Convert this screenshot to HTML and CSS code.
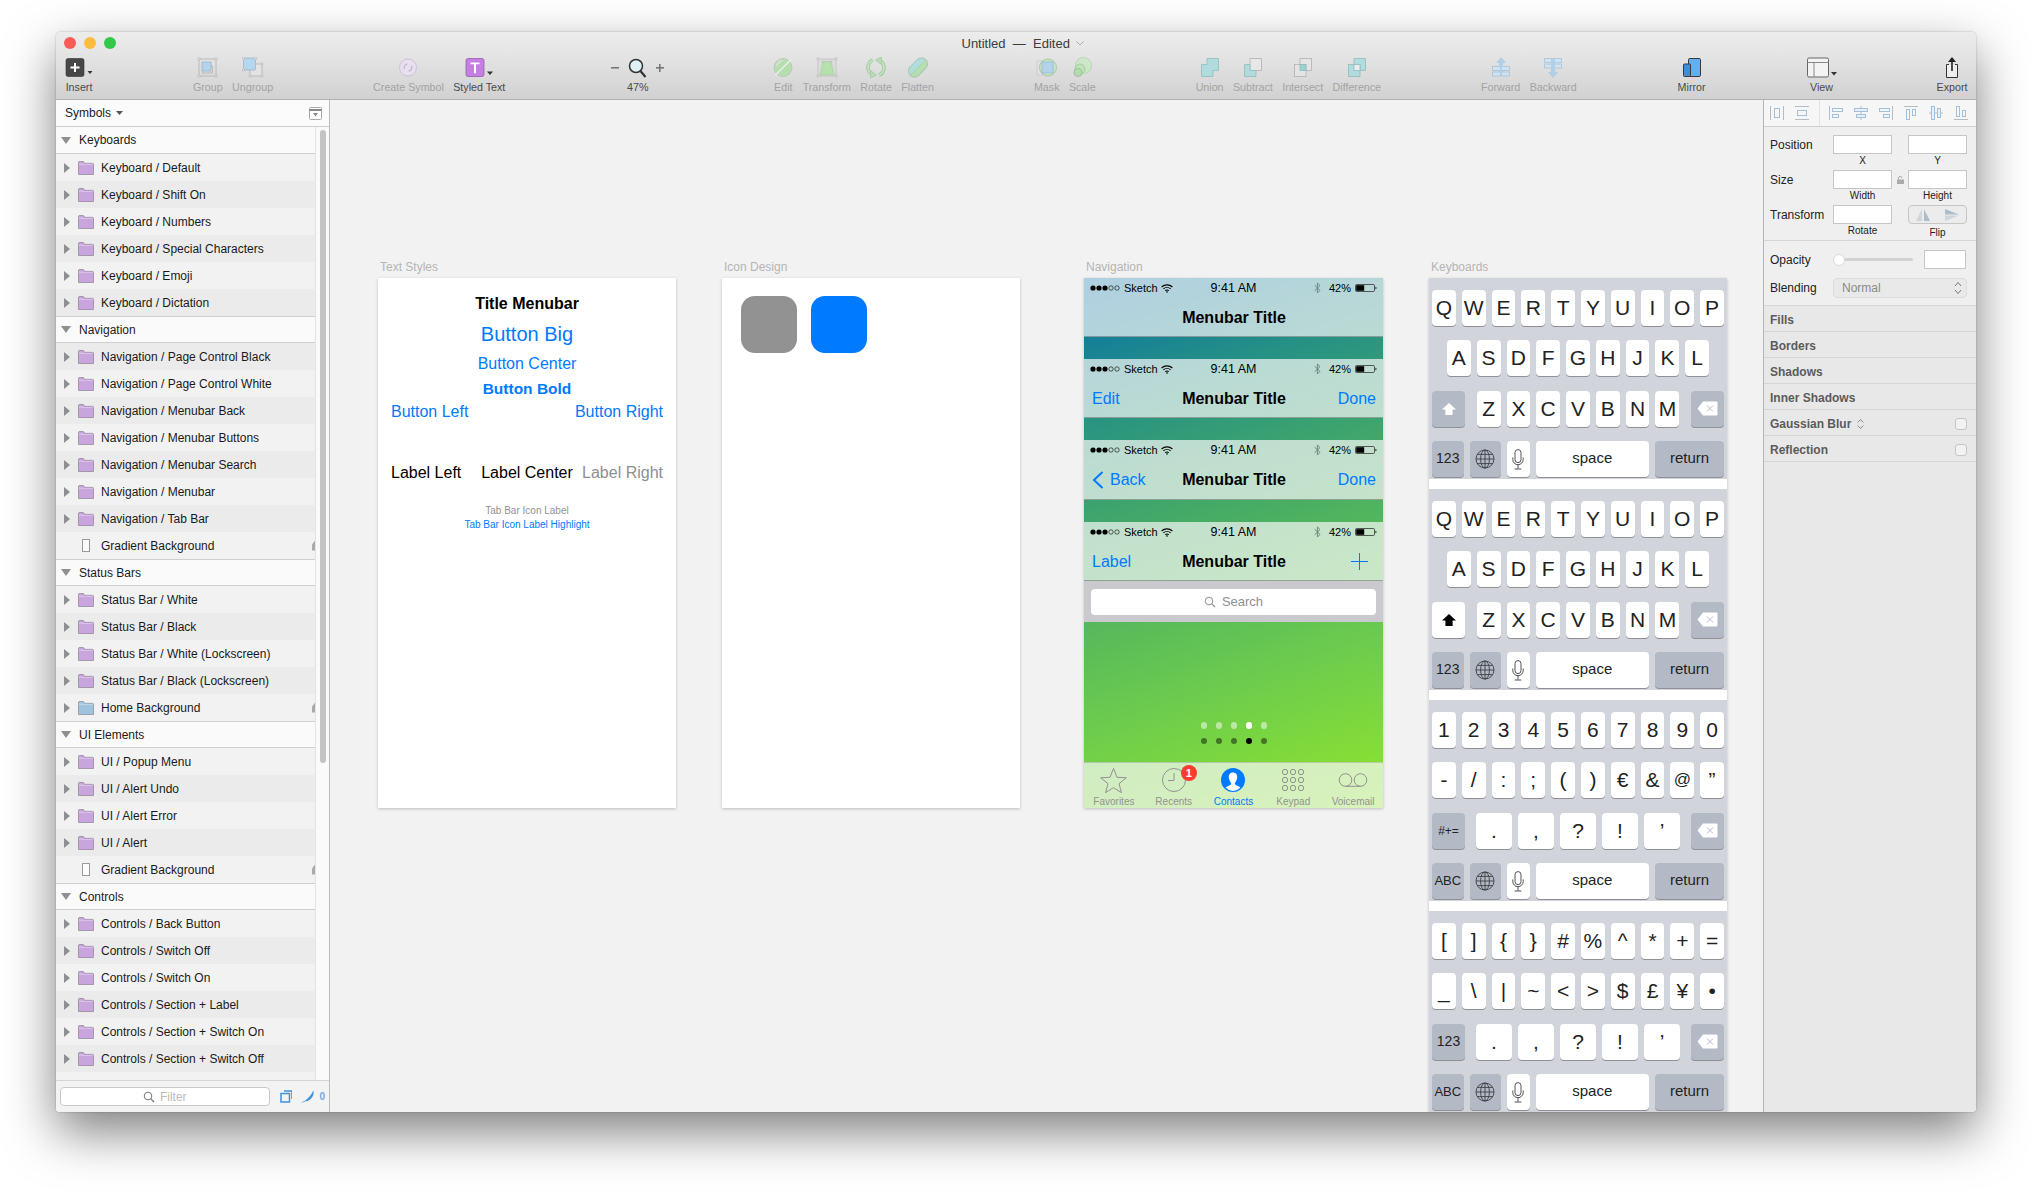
FILE: index.html
```html
<!DOCTYPE html>
<html lang="en">
  <head>
    <meta charset="UTF-8"/>
    <title>Untitled - Edited</title>
    <link rel="stylesheet" href="styles.css">
  </head>
  <body>
    <svg class="sprites" width="0" height="0">
      <symbol id="folder" viewBox="0 0 16 14"><path d="M.5 13.5V1.5q0-1 1-1h3.5q.8 0 1.2 1l.3.8h8q1 0 1 1v10.2z" fill="currentColor" stroke="#00000040"/><path d="M1 3.2h14" stroke="#ffffff70"/></symbol>
      <symbol id="magnifier" viewBox="0 0 12 12"><circle cx="5" cy="5" r="3.8" fill="none" stroke="currentColor" stroke-width="1"/><path d="M7.8 7.8 11 11" stroke="currentColor" stroke-width="1.2"/></symbol>
      <symbol id="signal" viewBox="0 0 31 6"><circle cx="3" cy="3" r="2.6"/><circle cx="9" cy="3" r="2.6"/><circle cx="15" cy="3" r="2.6"/><circle cx="21" cy="3" r="2.2" fill="none" stroke="#000" stroke-width=".6"/><circle cx="27" cy="3" r="2.2" fill="none" stroke="#000" stroke-width=".6"/></symbol>
      <symbol id="wifi" viewBox="0 0 12 9"><path d="M.6 3a8 8 0 0 1 10.8 0M2.4 4.9a5.4 5.4 0 0 1 7.2 0M4.2 6.7a2.8 2.8 0 0 1 3.6 0" fill="none" stroke="#000" stroke-width="1.1"/><path d="M6 9 4.9 7.8a1.6 1.6 0 0 1 2.2 0z"/></symbol>
      <symbol id="bluetooth" viewBox="0 0 7 12"><path d="M.6 3.2 6 8.4 3.4 11V1L6 3.6.6 8.8" fill="none" stroke="#6f8a80" stroke-width="1"/></symbol>
      <symbol id="battery" viewBox="0 0 22 8"><rect x=".5" y=".5" width="19" height="7" rx="1.2" fill="none" stroke="#333" stroke-width=".8"/><rect x="1.2" y="1.2" width="8" height="5.6"/><path d="M20.5 2.8q1 .2 1 1.2t-1 1.2z"/></symbol>
      <symbol id="shift" viewBox="0 0 16 14"><path d="M8 1 15 7.6h-3.4V13H4.4V7.6H1z" fill="currentColor"/></symbol>
      <symbol id="del" viewBox="0 0 21 15"><path d="M6 .5h13.5q1 0 1 1v12q0 1-1 1H6L.5 7.5z" fill="#fff"/><path d="M10 4.5l6 6m0-6-6 6" stroke="#b5bcc8" stroke-width="1"/></symbol>
      <symbol id="globe" viewBox="0 0 20 20"><g fill="none" stroke="#3c3f44" stroke-width=".9"><circle cx="10" cy="10" r="9"/><ellipse cx="10" cy="10" rx="4.4" ry="9"/><path d="M10 1v18M1 10h18M2.4 5.4h15.2M2.4 14.6h15.2"/></g></symbol>
      <symbol id="mic" viewBox="0 0 12 21"><g fill="none" stroke="#3c3f44" stroke-width=".9"><rect x="3" y=".6" width="6" height="13" rx="3"/><path d="M.8 8.5v2a5.2 5.2 0 0 0 10.4 0v-2M6 15.8v3.8M2.6 20h6.8"/></g></symbol>
      <symbol id="tri_down" viewBox="0 0 7 4"><path d="M0 0h7L3.5 4z" fill="currentColor"/></symbol>
    </svg>

    <div class="window">
      <div class="titlebar">
        <div class="lights">
          <span class="light light_red"></span>
          <span class="light light_yellow"></span>
          <span class="light light_green"></span>
        </div>
        <p class="window_title">Untitled &nbsp;&mdash;&nbsp; Edited <svg class="title_chevron" viewBox="0 0 8 5"><path d="M.5.5 4 4 7.5.5" fill="none" stroke="#aaa"/></svg></p>
      </div>

      <div class="toolbar">
        <div class="tool tool_on">
          <svg class="tool_icon" width="28" height="21" viewBox="0 0 28 21"><rect x="1" y="1.500" width="18" height="18" rx="2" fill="#464646" stroke="#333" stroke-width=".6"/><path d="M10 6v9M5.500 10.500h9" stroke="#fff" stroke-width="2"/><path d="M22.500 14h5L25 17z" fill="#333"/></svg>
          <span>Insert</span>
        </div>
        <div class="tool_group">
          <div class="tool">
            <svg class="tool_icon" width="22" height="21" viewBox="0 0 22 21"><g fill="none" stroke="#b4b4b4"><rect x="2" y="2" width="17" height="17"/><rect x="5.500" y="9" width="10" height="7"/></g><rect x="5" y="5" width="9" height="9" fill="#aed1ee" stroke="#85aac8" stroke-width=".7"/><g fill="#eee" stroke="#aaa" stroke-width=".7"><circle cx="2" cy="2" r="1.300"/><circle cx="19" cy="2" r="1.300"/><circle cx="2" cy="19" r="1.300"/><circle cx="19" cy="19" r="1.300"/></g></svg>
            <span>Group</span>
          </div>
          <div class="tool">
            <svg class="tool_icon" width="22" height="21" viewBox="0 0 22 21"><rect x="8" y="7" width="12" height="12" fill="#e4e4e4" stroke="#b4b4b4"/><rect x="1.500" y="1" width="12" height="12" rx="1" fill="#aed5f2" stroke="#85aac8" stroke-width=".7"/><g fill="#eee" stroke="#aaa" stroke-width=".7"><circle cx="1.500" cy="1.500" r="1.200"/><circle cx="13.500" cy="1.500" r="1.200"/><circle cx="1.500" cy="13" r="1.200"/><circle cx="20" cy="7" r="1.200"/><circle cx="8" cy="19" r="1.200"/><circle cx="20" cy="19" r="1.200"/></g></svg>
            <span>Ungroup</span>
          </div>
        </div>
        <div class="tool_group">
          <div class="tool">
            <svg class="tool_icon" width="20" height="21" viewBox="0 0 20 21"><circle cx="10" cy="10.500" r="8.500" fill="#e9e2ee" stroke="#cfbadd"/><path d="M6.500 12a3.800 3.800 0 0 1 3-5.200M13.500 9a3.800 3.800 0 0 1-3 5.200" fill="none" stroke="#cba7e2" stroke-width="1.300"/></svg>
            <span>Create Symbol</span>
          </div>
          <div class="tool tool_on">
            <svg class="tool_icon" width="30" height="21" viewBox="0 0 30 21"><rect x="2" y="1.500" width="18" height="18" rx="2" fill="#c67ee2" stroke="#8a56a5" stroke-width=".7"/><path d="M6.500 5.500h9v1.800h-3.500v9h-2v-9H6.500z" fill="#fff"/><path d="M23 14.500h6l-3 3.500z" fill="#333"/></svg>
            <span>Styled Text</span>
          </div>
        </div>
        <div class="zoom_tool tool_on">
          <div class="zoom_controls">
            <span class="zoom_minus"></span>
            <svg class="tool_icon" width="19" height="20" viewBox="0 0 19 20"><circle cx="8" cy="8" r="6.500" fill="#dff0f5" stroke="#333" stroke-width="1.500"/><path d="M12.500 13 17.500 19" stroke="#333" stroke-width="2.200"/></svg>
            <span class="zoom_plus"></span>
          </div>
          <span>47%</span>
        </div>
        <div class="tool_group tool_group_wide">
          <div class="tool">
            <svg class="tool_icon" width="20" height="21" viewBox="0 0 20 21"><circle cx="10" cy="10.500" r="9" fill="#afdfa6" stroke="#b7c7b4"/><path d="M2.500 18 17.500 3" stroke="#f2f2f2" stroke-width="1.300"/><path d="M2.500 10a8 8 0 0 1 8-7.500L3 10z" fill="#d8e0d6"/></svg>
            <span>Edit</span>
          </div>
          <div class="tool">
            <svg class="tool_icon" width="22" height="21" viewBox="0 0 22 21"><rect x="2" y="2" width="18" height="17" fill="#dcdcdc" stroke="#bbb" stroke-width=".8"/><path d="M7 4.500h8L18 18H4z" fill="#aee3a4" stroke="#9bc496" stroke-width=".6"/><g fill="#eee" stroke="#aaa" stroke-width=".7"><circle cx="2" cy="2" r="1.300"/><circle cx="20" cy="2" r="1.300"/><circle cx="2" cy="19" r="1.300"/><circle cx="20" cy="19" r="1.300"/><circle cx="7" cy="5" r="1"/><circle cx="15" cy="5" r="1"/></g></svg>
            <span>Transform</span>
          </div>
          <div class="tool">
            <svg class="tool_icon" width="24" height="21" viewBox="0 0 24 21"><g fill="none"><path d="M9 3A8 8 0 0 0 7.500 17" stroke="#93c48f" stroke-width="3.400"/><path d="M15 18A8 8 0 0 0 16.500 4" stroke="#93c48f" stroke-width="3.400"/><path d="M9 3A8 8 0 0 0 7.500 17" stroke="#c6e6c1" stroke-width="1.600"/><path d="M15 18A8 8 0 0 0 16.500 4" stroke="#c6e6c1" stroke-width="1.600"/></g><path d="M12.500 18 6.500 21 6.500 13.500zM11.500 3l6-3 0 7.500z" fill="#b4dcae" stroke="#93c48f" stroke-width=".7"/></svg>
            <span>Rotate</span>
          </div>
          <div class="tool">
            <svg class="tool_icon" width="22" height="21" viewBox="0 0 22 21"><g transform="rotate(-45 11 10.500)"><rect x="0" y="4.500" width="22" height="12" rx="6" fill="#afdfa6" stroke="#a5bfa6"/><path d="M6 4.500h10a6 6 0 0 1 6 6H0a6 6 0 0 1 6-6z" fill="#a8dedb" stroke="#a5bfb6" stroke-width=".6"/></g></svg>
            <span>Flatten</span>
          </div>
        </div>
        <div class="tool_group">
          <div class="tool">
            <svg class="tool_icon" width="22" height="21" viewBox="0 0 22 21"><rect x="1" y="4" width="14" height="14" fill="#e2e2e2" stroke="#ccc"/><circle cx="12" cy="10.500" r="8.500" fill="#c2e5bd" stroke="#9cc896"/><rect x="6" y="5" width="11" height="11" fill="#aed1ee" stroke="#8db1cd" stroke-width=".8"/></svg>
            <span>Mask</span>
          </div>
          <div class="tool">
            <svg class="tool_icon" width="22" height="21" viewBox="0 0 22 21"><circle cx="12.500" cy="8.500" r="8" fill="#cbe9c6" stroke="#aed6a9"/><circle cx="9" cy="12" r="5" fill="#bce2b6" stroke="#9cc896"/><circle cx="7" cy="15.500" r="4" fill="#afdaa8" stroke="#91be8b"/></svg>
            <span>Scale</span>
          </div>
        </div>
        <div class="tool_group">
          <div class="tool">
            <svg class="tool_icon" width="20" height="21" viewBox="0 0 20 21"><path d="M7 1.500h11.500v12H13v6H1.500v-12H7z" fill="#a9dcdd" stroke="#86b6b8" stroke-width=".8"/></svg>
            <span>Union</span>
          </div>
          <div class="tool">
            <svg class="tool_icon" width="20" height="21" viewBox="0 0 20 21"><rect x="7" y="1.500" width="11.500" height="12" fill="#e9e9e9" stroke="#aaa" stroke-width=".8"/><path d="M1.500 7.500H7v6h6v6H1.500z" fill="#a9dcdd" stroke="#86b6b8" stroke-width=".8"/></svg>
            <span>Subtract</span>
          </div>
          <div class="tool">
            <svg class="tool_icon" width="20" height="21" viewBox="0 0 20 21"><g fill="#e6e6e6" stroke="#aaa" stroke-width=".8"><rect x="7" y="1.500" width="11.500" height="12"/><rect x="1.500" y="7.500" width="11.500" height="12"/></g><rect x="7" y="7.500" width="6" height="6" fill="#8fcfd1" stroke="#86b6b8" stroke-width=".8"/></svg>
            <span>Intersect</span>
          </div>
          <div class="tool">
            <svg class="tool_icon" width="20" height="21" viewBox="0 0 20 21"><g fill="#a9dcdd" stroke="#86b6b8" stroke-width=".8"><rect x="7" y="1.500" width="11.500" height="12"/><rect x="1.500" y="7.500" width="11.500" height="12"/></g><rect x="7" y="7.500" width="6" height="6" fill="#f0f0f0" stroke="#86b6b8" stroke-width=".8"/></svg>
            <span>Difference</span>
          </div>
        </div>
        <div class="tool_group">
          <div class="tool">
            <svg class="tool_icon" width="20" height="21" viewBox="0 0 20 21"><path d="M10 0 15 6H12v13H8V6H5z" fill="#a9cde9"/><g fill="#cfe3f3" stroke="#9cbfdc" stroke-width=".8"><rect x="1.500" y="9.500" width="17" height="4"/><rect x="1.500" y="15" width="17" height="4"/></g><path d="M10 1.500 13 6h-2v13H9V6H7z" fill="#a9cde9"/></svg>
            <span>Forward</span>
          </div>
          <div class="tool">
            <svg class="tool_icon" width="20" height="21" viewBox="0 0 20 21"><g fill="#cfe3f3" stroke="#9cbfdc" stroke-width=".8"><rect x="1.500" y="1.500" width="17" height="4"/><rect x="1.500" y="7" width="17" height="4"/></g><path d="M8 2h4v13h3l-5 6-5-6h3z" fill="#a9cde9"/></svg>
            <span>Backward</span>
          </div>
        </div>
        <div class="tool tool_on tool_loose">
          <svg class="tool_icon" width="20" height="21" viewBox="0 0 20 21"><rect x="6.500" y="1.500" width="12" height="18" rx="1.300" fill="#62b0f4" stroke="#3a3a3a"/><rect x="1.500" y="7" width="7" height="12.500" rx="1" fill="#3c8edb" stroke="#3a3a3a"/></svg>
          <span>Mirror</span>
        </div>
        <div class="tool tool_on tool_loose">
          <svg class="tool_icon" width="30" height="21" viewBox="0 0 30 21"><rect x=".5" y="1" width="21" height="19" rx="1.500" fill="#f3f3f3" stroke="#666"/><path d="M.5 5.500h21M7 5.500V20" stroke="#888" fill="none"/><path d="M24 15h6l-3 3.500z" fill="#333"/></svg>
          <span>View</span>
        </div>
        <div class="tool tool_on">
          <svg class="tool_icon" width="14" height="21" viewBox="0 0 14 21"><path d="M4 7.500H1.500v13h11v-13H10" fill="#eee" stroke="#333"/><path d="M7 14V3" stroke="#222" stroke-width="1.600"/><path d="M7 0 11 5H3z" fill="#222"/></svg>
          <span>Export</span>
        </div>
      </div>

      <div class="workspace">
        <aside class="sidebar">
          <div class="sidebar_head">
            <span>Symbols</span>
            <svg class="head_tri" width="7" height="4"><use href="#tri_down"/></svg>
            <svg class="head_toggle" width="13" height="13" viewBox="0 0 13 13"><rect x=".5" y=".5" width="12" height="12" rx="1" fill="#fff" stroke="#aaa"/><path d="M.5 3h12" stroke="#888" stroke-width="2"/><path d="M4 6h5L6.500 9.500z" fill="#888"/></svg>
          </div>
          <div class="sidebar_body">
            <div class="layer_list">
              <div class="layer_header"><span class="arrow_down"></span>Keyboards</div>
              <div class="layer_row"><span class="arrow_right"></span><svg class="folder"><use href="#folder"/></svg>Keyboard / Default</div>
              <div class="layer_row"><span class="arrow_right"></span><svg class="folder"><use href="#folder"/></svg>Keyboard / Shift On</div>
              <div class="layer_row"><span class="arrow_right"></span><svg class="folder"><use href="#folder"/></svg>Keyboard / Numbers</div>
              <div class="layer_row"><span class="arrow_right"></span><svg class="folder"><use href="#folder"/></svg>Keyboard / Special Characters</div>
              <div class="layer_row"><span class="arrow_right"></span><svg class="folder"><use href="#folder"/></svg>Keyboard / Emoji</div>
              <div class="layer_row"><span class="arrow_right"></span><svg class="folder"><use href="#folder"/></svg>Keyboard / Dictation</div>
              <div class="layer_header"><span class="arrow_down"></span>Navigation</div>
              <div class="layer_row"><span class="arrow_right"></span><svg class="folder"><use href="#folder"/></svg>Navigation / Page Control Black</div>
              <div class="layer_row"><span class="arrow_right"></span><svg class="folder"><use href="#folder"/></svg>Navigation / Page Control White</div>
              <div class="layer_row"><span class="arrow_right"></span><svg class="folder"><use href="#folder"/></svg>Navigation / Menubar Back</div>
              <div class="layer_row"><span class="arrow_right"></span><svg class="folder"><use href="#folder"/></svg>Navigation / Menubar Buttons</div>
              <div class="layer_row"><span class="arrow_right"></span><svg class="folder"><use href="#folder"/></svg>Navigation / Menubar Search</div>
              <div class="layer_row"><span class="arrow_right"></span><svg class="folder"><use href="#folder"/></svg>Navigation / Menubar</div>
              <div class="layer_row"><span class="arrow_right"></span><svg class="folder"><use href="#folder"/></svg>Navigation / Tab Bar</div>
              <div class="layer_row layer_row_page"><span class="page_icon"></span>Gradient Background<span class="row_flag"></span></div>
              <div class="layer_header"><span class="arrow_down"></span>Status Bars</div>
              <div class="layer_row"><span class="arrow_right"></span><svg class="folder"><use href="#folder"/></svg>Status Bar / White</div>
              <div class="layer_row"><span class="arrow_right"></span><svg class="folder"><use href="#folder"/></svg>Status Bar / Black</div>
              <div class="layer_row"><span class="arrow_right"></span><svg class="folder"><use href="#folder"/></svg>Status Bar / White (Lockscreen)</div>
              <div class="layer_row"><span class="arrow_right"></span><svg class="folder"><use href="#folder"/></svg>Status Bar / Black (Lockscreen)</div>
              <div class="layer_row"><span class="arrow_right"></span><svg class="folder folder_blue"><use href="#folder"/></svg>Home Background<span class="row_flag"></span></div>
              <div class="layer_header"><span class="arrow_down"></span>UI Elements</div>
              <div class="layer_row"><span class="arrow_right"></span><svg class="folder"><use href="#folder"/></svg>UI / Popup Menu</div>
              <div class="layer_row"><span class="arrow_right"></span><svg class="folder"><use href="#folder"/></svg>UI / Alert Undo</div>
              <div class="layer_row"><span class="arrow_right"></span><svg class="folder"><use href="#folder"/></svg>UI / Alert Error</div>
              <div class="layer_row"><span class="arrow_right"></span><svg class="folder"><use href="#folder"/></svg>UI / Alert</div>
              <div class="layer_row layer_row_page"><span class="page_icon"></span>Gradient Background<span class="row_flag"></span></div>
              <div class="layer_header"><span class="arrow_down"></span>Controls</div>
              <div class="layer_row"><span class="arrow_right"></span><svg class="folder"><use href="#folder"/></svg>Controls / Back Button</div>
              <div class="layer_row"><span class="arrow_right"></span><svg class="folder"><use href="#folder"/></svg>Controls / Switch Off</div>
              <div class="layer_row"><span class="arrow_right"></span><svg class="folder"><use href="#folder"/></svg>Controls / Switch On</div>
              <div class="layer_row"><span class="arrow_right"></span><svg class="folder"><use href="#folder"/></svg>Controls / Section + Label</div>
              <div class="layer_row"><span class="arrow_right"></span><svg class="folder"><use href="#folder"/></svg>Controls / Section + Switch On</div>
              <div class="layer_row"><span class="arrow_right"></span><svg class="folder"><use href="#folder"/></svg>Controls / Section + Switch Off</div>
              <div class="layer_row"><svg class="folder folder_cut"><use href="#folder"/></svg></div>
            </div>
            <div class="scroll_track"><div class="scroll_thumb"></div></div>
          </div>
          <div class="sidebar_foot">
            <div class="filter_box">
              <svg class="filter_icon" width="12" height="12"><use href="#magnifier"/></svg>
              <span>Filter</span>
            </div>
            <svg class="foot_icon" width="13" height="13" viewBox="0 0 13 13"><g fill="none" stroke="#3d93dc" stroke-width="1.500"><path d="M4 1h8v8"/><rect x="1" y="3.500" width="8.500" height="8.500"/></g></svg>
            <svg class="foot_icon foot_pen" width="13" height="13" viewBox="0 0 13 13"><path d="M0 12.500C5 11 9 7 12.500 .5c1 4-1.500 9-6 10.500L4 11.500 1.500 12.500z" fill="#3d93dc"/></svg>
            <span class="foot_count">0</span>
          </div>
        </aside>

        <main class="canvas">
          <section class="artboard">
            <p class="artboard_label">Text Styles</p>
            <div class="board board_text">
              <p class="ts ts_title">Title Menubar</p>
              <p class="ts ts_big">Button Big</p>
              <p class="ts ts_center">Button Center</p>
              <p class="ts ts_bold">Button Bold</p>
              <div class="ts_row ts_buttons"><span>Button Left</span><span>Button Right</span></div>
              <div class="ts_labels"><span class="ts_left">Label Left</span><span>Label Center</span><span class="ts_muted">Label Right</span></div>
              <p class="ts ts_tab">Tab Bar Icon Label</p>
              <p class="ts ts_tab ts_tab_on">Tab Bar Icon Label Highlight</p>
            </div>
          </section>

          <section class="artboard artboard_icons">
            <p class="artboard_label">Icon Design</p>
            <div class="board board_icons">
              <div class="icon_tile"></div>
              <div class="icon_tile icon_tile_blue"></div>
            </div>
          </section>

          <section class="artboard artboard_nav">
            <p class="artboard_label">Navigation</p>
            <div class="board board_nav">
              <div class="nav_bar">
                <div class="status"><div class="status_left"><svg width="31" height="6"><use href="#signal"/></svg><span>Sketch</span><svg width="12" height="9"><use href="#wifi"/></svg></div><span class="status_time">9:41 AM</span><div class="status_right"><svg width="7" height="12"><use href="#bluetooth"/></svg><span>42%</span><svg width="22" height="8"><use href="#battery"/></svg></div></div>
                <div class="nav_row"><span></span><span class="nav_title">Menubar Title</span><span></span></div>
              </div>
              <div class="nav_bar">
                <div class="status"><div class="status_left"><svg width="31" height="6"><use href="#signal"/></svg><span>Sketch</span><svg width="12" height="9"><use href="#wifi"/></svg></div><span class="status_time">9:41 AM</span><div class="status_right"><svg width="7" height="12"><use href="#bluetooth"/></svg><span>42%</span><svg width="22" height="8"><use href="#battery"/></svg></div></div>
                <div class="nav_row"><span class="nav_btn">Edit</span><span class="nav_title">Menubar Title</span><span class="nav_btn nav_btn_right">Done</span></div>
              </div>
              <div class="nav_bar nav_bar_tall">
                <div class="status"><div class="status_left"><svg width="31" height="6"><use href="#signal"/></svg><span>Sketch</span><svg width="12" height="9"><use href="#wifi"/></svg></div><span class="status_time">9:41 AM</span><div class="status_right"><svg width="7" height="12"><use href="#bluetooth"/></svg><span>42%</span><svg width="22" height="8"><use href="#battery"/></svg></div></div>
                <div class="nav_row"><span class="nav_btn nav_back"><svg width="12" height="18" viewBox="0 0 12 18"><path d="M10.500 1 2 9l8.500 8" fill="none" stroke="#007aff" stroke-width="2"/></svg>Back</span><span class="nav_title">Menubar Title</span><span class="nav_btn nav_btn_right">Done</span></div>
              </div>
              <div class="nav_bar">
                <div class="status"><div class="status_left"><svg width="31" height="6"><use href="#signal"/></svg><span>Sketch</span><svg width="12" height="9"><use href="#wifi"/></svg></div><span class="status_time">9:41 AM</span><div class="status_right"><svg width="7" height="12"><use href="#bluetooth"/></svg><span>42%</span><svg width="22" height="8"><use href="#battery"/></svg></div></div>
                <div class="nav_row"><span class="nav_btn">Label</span><span class="nav_title">Menubar Title</span><span class="nav_btn nav_btn_right nav_plus"><svg width="17" height="17" viewBox="0 0 17 17"><path d="M8.500 0v17M0 8.500h17" stroke="#007aff" stroke-width="1"/></svg></span></div>
              </div>
              <div class="search_bar">
                <div class="search_field">
                  <svg width="12" height="12"><use href="#magnifier"/></svg>
                  <span>Search</span>
                </div>
              </div>
              <div class="home_area">
                <div class="page_dots"><i></i><i></i><i></i><i class="on"></i><i></i></div>
                <div class="page_dots page_dots_dark"><i></i><i></i><i></i><i class="on"></i><i></i></div>
              </div>
              <div class="tab_bar">
                <div class="tab">
                  <svg width="27" height="26" viewBox="0 0 27 26"><path d="M13.500 1.500 17 10.300l9.300.5-7.300 5.900 2.500 9-8-5.100-8 5.100 2.500-9L.700 10.800l9.300-.5z" fill="none" stroke="#929292"/></svg>
                  <span>Favorites</span>
                </div>
                <div class="tab">
                  <svg width="26" height="26" viewBox="0 0 26 26"><circle cx="13" cy="13" r="11.500" fill="none" stroke="#929292"/><path d="M13 6v7.500H7" fill="none" stroke="#929292"/></svg>
                  <span class="tab_badge">1</span>
                  <span>Recents</span>
                </div>
                <div class="tab tab_on">
                  <svg width="26" height="26" viewBox="0 0 26 26"><circle cx="13" cy="13" r="12" fill="#007aff"/><path d="M13 5.500c3 0 4.400 2.300 4.200 5-.2 2.600-1.400 4.400-2.300 5.400-.5 1 .1 1.700 2 2.500 1.500.6 2.800 1.200 3.600 2A12 12 0 0 1 13 24a12 12 0 0 1-7.500-3.600c.8-.8 2.100-1.400 3.600-2 1.900-.8 2.500-1.500 2-2.500-.9-1-2.100-2.800-2.300-5.400-.2-2.700 1.200-5 4.200-5z" fill="#fff"/></svg>
                  <span>Contacts</span>
                </div>
                <div class="tab">
                  <svg width="26" height="26" viewBox="0 0 26 26"><g fill="none" stroke="#929292"><circle cx="5" cy="5" r="2.700"/><circle cx="13" cy="5" r="2.700"/><circle cx="21" cy="5" r="2.700"/><circle cx="5" cy="13" r="2.700"/><circle cx="13" cy="13" r="2.700"/><circle cx="21" cy="13" r="2.700"/><circle cx="5" cy="21" r="2.700"/><circle cx="13" cy="21" r="2.700"/><circle cx="21" cy="21" r="2.700"/></g></svg>
                  <span>Keypad</span>
                </div>
                <div class="tab">
                  <svg width="30" height="26" viewBox="0 0 30 26"><g fill="none" stroke="#929292"><circle cx="7.500" cy="13" r="6.300"/><circle cx="22.500" cy="13" r="6.300"/><path d="M7.500 19.300h15"/></g></svg>
                  <span>Voicemail</span>
                </div>
              </div>
            </div>
          </section>

          <section class="artboard artboard_keys">
            <p class="artboard_label">Keyboards</p>
            <div class="board_keys">
              <div class="keyboard">
                <div class="key_row"><span class="key">Q</span><span class="key">W</span><span class="key">E</span><span class="key">R</span><span class="key">T</span><span class="key">Y</span><span class="key">U</span><span class="key">I</span><span class="key">O</span><span class="key">P</span></div>
                <div class="key_row key_row_mid"><span class="key">A</span><span class="key">S</span><span class="key">D</span><span class="key">F</span><span class="key">G</span><span class="key">H</span><span class="key">J</span><span class="key">K</span><span class="key">L</span></div>
                <div class="key_row key_row_split">
                  <span class="key key_fn key_side key_white"><svg width="16" height="14"><use href="#shift"/></svg></span>
                  <div class="key_set"><span class="key">Z</span><span class="key">X</span><span class="key">C</span><span class="key">V</span><span class="key">B</span><span class="key">N</span><span class="key">M</span></div>
                  <span class="key key_fn key_side"><svg width="21" height="15"><use href="#del"/></svg></span>
                </div>
                <div class="key_row">
                  <span class="key key_fn key_mode key_small">123</span>
                  <span class="key key_fn key_mode"><svg width="20" height="20"><use href="#globe"/></svg></span>
                  <span class="key"><svg width="12" height="21"><use href="#mic"/></svg></span>
                  <span class="key key_space">space</span>
                  <span class="key key_fn key_return">return</span>
                </div>
              </div>
              <div class="keyboard">
                <div class="key_row"><span class="key">Q</span><span class="key">W</span><span class="key">E</span><span class="key">R</span><span class="key">T</span><span class="key">Y</span><span class="key">U</span><span class="key">I</span><span class="key">O</span><span class="key">P</span></div>
                <div class="key_row key_row_mid"><span class="key">A</span><span class="key">S</span><span class="key">D</span><span class="key">F</span><span class="key">G</span><span class="key">H</span><span class="key">J</span><span class="key">K</span><span class="key">L</span></div>
                <div class="key_row key_row_split">
                  <span class="key key_side key_black"><svg width="16" height="14"><use href="#shift"/></svg></span>
                  <div class="key_set"><span class="key">Z</span><span class="key">X</span><span class="key">C</span><span class="key">V</span><span class="key">B</span><span class="key">N</span><span class="key">M</span></div>
                  <span class="key key_fn key_side"><svg width="21" height="15"><use href="#del"/></svg></span>
                </div>
                <div class="key_row">
                  <span class="key key_fn key_mode key_small">123</span>
                  <span class="key key_fn key_mode"><svg width="20" height="20"><use href="#globe"/></svg></span>
                  <span class="key"><svg width="12" height="21"><use href="#mic"/></svg></span>
                  <span class="key key_space">space</span>
                  <span class="key key_fn key_return">return</span>
                </div>
              </div>
              <div class="keyboard">
                <div class="key_row"><span class="key">1</span><span class="key">2</span><span class="key">3</span><span class="key">4</span><span class="key">5</span><span class="key">6</span><span class="key">7</span><span class="key">8</span><span class="key">9</span><span class="key">0</span></div>
                <div class="key_row"><span class="key">-</span><span class="key">/</span><span class="key">:</span><span class="key">;</span><span class="key">(</span><span class="key">)</span><span class="key">€</span><span class="key">&amp;</span><span class="key key_at">@</span><span class="key">”</span></div>
                <div class="key_row key_row_split">
                  <span class="key key_fn key_side key_tiny">#+=</span>
                  <div class="key_set"><span class="key key_wide">.</span><span class="key key_wide">,</span><span class="key key_wide">?</span><span class="key key_wide">!</span><span class="key key_wide">’</span></div>
                  <span class="key key_fn key_side"><svg width="21" height="15"><use href="#del"/></svg></span>
                </div>
                <div class="key_row">
                  <span class="key key_fn key_mode key_abc">ABC</span>
                  <span class="key key_fn key_mode"><svg width="20" height="20"><use href="#globe"/></svg></span>
                  <span class="key"><svg width="12" height="21"><use href="#mic"/></svg></span>
                  <span class="key key_space">space</span>
                  <span class="key key_fn key_return">return</span>
                </div>
              </div>
              <div class="keyboard">
                <div class="key_row"><span class="key">[</span><span class="key">]</span><span class="key">{</span><span class="key">}</span><span class="key">#</span><span class="key">%</span><span class="key">^</span><span class="key">*</span><span class="key">+</span><span class="key">=</span></div>
                <div class="key_row"><span class="key">_</span><span class="key">\</span><span class="key">|</span><span class="key">~</span><span class="key">&lt;</span><span class="key">&gt;</span><span class="key">$</span><span class="key">£</span><span class="key">¥</span><span class="key">•</span></div>
                <div class="key_row key_row_split">
                  <span class="key key_fn key_side key_small">123</span>
                  <div class="key_set"><span class="key key_wide">.</span><span class="key key_wide">,</span><span class="key key_wide">?</span><span class="key key_wide">!</span><span class="key key_wide">’</span></div>
                  <span class="key key_fn key_side"><svg width="21" height="15"><use href="#del"/></svg></span>
                </div>
                <div class="key_row">
                  <span class="key key_fn key_mode key_abc">ABC</span>
                  <span class="key key_fn key_mode"><svg width="20" height="20"><use href="#globe"/></svg></span>
                  <span class="key"><svg width="12" height="21"><use href="#mic"/></svg></span>
                  <span class="key key_space">space</span>
                  <span class="key key_fn key_return">return</span>
                </div>
              </div>
            </div>
          </section>
        </main>

        <aside class="inspector">
          <div class="align_bar">
            <svg width="14" height="14" viewBox="0 0 14 14"><g fill="none" stroke="#b3bdc6"><path d="M.5 0v14M13.500 0v14"/></g><rect x="4.500" y="2.500" width="5" height="9" fill="none" stroke="#a0c0dc"/></svg>
            <svg width="14" height="14" viewBox="0 0 14 14"><g fill="none" stroke="#b3bdc6"><path d="M0 .5h14M0 13.500h14"/></g><rect x="2.500" y="4.500" width="9" height="5" fill="none" stroke="#a0c0dc"/></svg>
            <span class="align_sep"></span>
            <svg width="14" height="14" viewBox="0 0 14 14"><path d="M.5 0v14" stroke="#b3bdc6"/><g fill="none" stroke="#a0c0dc"><rect x="3.500" y="2.500" width="10" height="3"/><rect x="3.500" y="8.500" width="6" height="3"/></g></svg>
            <svg width="14" height="14" viewBox="0 0 14 14"><path d="M7 0v14" stroke="#b3bdc6"/><g fill="#e8eff5" stroke="#a0c0dc"><rect x=".5" y="2.500" width="13" height="3"/><rect x="2.500" y="8.500" width="9" height="3"/></g></svg>
            <svg width="14" height="14" viewBox="0 0 14 14"><path d="M13.500 0v14" stroke="#b3bdc6"/><g fill="none" stroke="#a0c0dc"><rect x=".5" y="2.500" width="10" height="3"/><rect x="4.500" y="8.500" width="6" height="3"/></g></svg>
            <svg width="14" height="14" viewBox="0 0 14 14"><path d="M0 .5h14" stroke="#b3bdc6"/><g fill="none" stroke="#a0c0dc"><rect x="2.500" y="3.500" width="3" height="10"/><rect x="8.500" y="3.500" width="3" height="6"/></g></svg>
            <svg width="14" height="14" viewBox="0 0 14 14"><path d="M0 7h14" stroke="#b3bdc6"/><g fill="#e8eff5" stroke="#a0c0dc"><rect x="2.500" y=".5" width="3" height="13"/><rect x="8.500" y="2.500" width="3" height="9"/></g></svg>
            <svg width="14" height="14" viewBox="0 0 14 14"><path d="M0 13.500h14" stroke="#b3bdc6"/><g fill="none" stroke="#a0c0dc"><rect x="2.500" y=".5" width="3" height="10"/><rect x="8.500" y="4.500" width="3" height="6"/></g></svg>
          </div>
          <div class="geometry">
            <span class="field_label">Position</span>
            <label class="field"><span class="input_box"></span><span class="field_caption">X</span></label>
            <span></span>
            <label class="field"><span class="input_box"></span><span class="field_caption">Y</span></label>

            <span class="field_label">Size</span>
            <label class="field"><span class="input_box"></span><span class="field_caption">Width</span></label>
            <svg class="lock_icon" width="7" height="8" viewBox="0 0 7 8"><rect y="3.500" width="7" height="4.500" fill="#aaa"/><path d="M1.500 3.500V2a1.700 1.700 0 0 1 3.400 0" fill="none" stroke="#aaa"/></svg>
            <label class="field"><span class="input_box"></span><span class="field_caption">Height</span></label>

            <span class="field_label">Transform</span>
            <label class="field"><span class="input_box"></span><span class="field_caption">Rotate</span></label>
            <span></span>
            <label class="field">
              <span class="flip_box">
                <svg width="14" height="12" viewBox="0 0 14 12"><path d="M6 0v12H0z" fill="#cfd6dc"/><path d="M8 0v12h6z" fill="#aebcc8"/></svg>
                <svg width="14" height="12" viewBox="0 0 14 12"><path d="M0 5.500h14L0 0z" fill="#aebcc8"/><path d="M0 6.500h14L0 12z" fill="#cfd6dc"/></svg>
              </span>
              <span class="field_caption field_caption_flip">Flip</span>
            </label>
          </div>
          <div class="style_box">
            <div class="style_row">
              <span class="field_label">Opacity</span>
              <div class="slider"><span class="slider_knob"></span></div>
              <span class="input_box input_short"></span>
            </div>
            <div class="style_row">
              <span class="field_label">Blending</span>
              <div class="select_box">
                <span>Normal</span>
                <svg width="8" height="14" viewBox="0 0 8 14"><path d="M1 5 4 1.500 7 5M1 9l3 3.500L7 9" fill="none" stroke="#777"/></svg>
              </div>
            </div>
          </div>
          <div class="section_row">Fills</div>
          <div class="section_row">Borders</div>
          <div class="section_row">Shadows</div>
          <div class="section_row">Inner Shadows</div>
          <div class="section_row">
            <span>Gaussian Blur</span>
            <svg class="blur_chevron" width="7" height="12" viewBox="0 0 7 12"><path d="M.7 4.500 3.500 1.500l2.800 3M.7 7.500l2.800 3 2.800-3" fill="none" stroke="#888"/></svg>
            <span class="check_box"></span>
          </div>
          <div class="section_row"><span>Reflection</span><span class="check_box"></span></div>
        </aside>
      </div>
    </div>
  </body>
</html>
```

FILE: styles.css
```css
* {
  box-sizing: border-box;
}
html, body {
  margin: 0;
  height: 100%;
}
body {
  background-color: #fff;
  padding: 32px 56px;
  font-family: "Liberation Sans", Arial, sans-serif;
  overflow: hidden;
}
p {
  margin: 0;
}
.sprites {
  position: absolute;
}

.window {
  width: 1920px;
  height: 1080px;
  display: flex;
  flex-direction: column;
  border-radius: 5px 5px 4px 4px;
  overflow: hidden;
  box-shadow: 0 20px 50px rgba(0, 0, 0, 0.5), 0 0 2px rgba(0, 0, 0, 0.3);
}

/* title bar + toolbar */
.titlebar {
  height: 22px;
  display: grid;
  grid-template-columns: 1fr auto 1fr;
  align-items: center;
  padding: 0 8px;
  background: linear-gradient(#ececec, #e5e5e5);
}
.lights {
  display: flex;
  gap: 8px;
}
.light {
  width: 12px;
  height: 12px;
  border-radius: 50%;
}
.light_red { background-color: #fc5b57; }
.light_yellow { background-color: #fdbc40; }
.light_green { background-color: #34c84a; }
.window_title {
  padding-left: 13px;
  font-size: 13px;
  color: #3c3c3c;
  white-space: nowrap;
}
.title_chevron {
  width: 8px;
  height: 5px;
  margin-left: 2px;
  vertical-align: 2px;
}
.toolbar {
  height: 46px;
  display: flex;
  padding: 3px 9px 0 9px;
  background: linear-gradient(#e5e5e5, #d1d1d1);
  border-bottom: 1px solid #b1b1b1;
}
.toolbar > * {
  flex: none;
}
.toolbar > * + * {
  margin-left: 100px;
}
.toolbar > .tool_loose {
  margin-left: 101px;
}
.toolbar > .zoom_tool {
  margin-left: 106px;
}
.toolbar > .tool_group_wide {
  margin-left: 109px;
}
.tool_group {
  display: flex;
  gap: 9.4px;
}
.tool, .zoom_tool {
  display: flex;
  flex-direction: column;
  align-items: center;
  font-size: 10.7px;
  line-height: 13px;
  color: #a3a3a3;
  white-space: nowrap;
}
.tool_on {
  color: #4a4a4a;
}
.tool_icon {
  display: block;
  height: 21px;
  margin-bottom: 3px;
}
.tool:not(.tool_on) .tool_icon {
  opacity: 0.85;
}
.zoom_tool {
  width: 53px;
}
.zoom_controls {
  display: flex;
  align-items: center;
  justify-content: space-between;
  width: 100%;
  height: 24px;
  padding-bottom: 3px;
}
.zoom_controls .tool_icon {
  margin-bottom: 0;
  height: 20px;
}
.zoom_minus, .zoom_plus {
  width: 8px;
  height: 8px;
  background: linear-gradient(#777, #777) center / 8px 1.6px no-repeat;
}
.zoom_plus {
  background: linear-gradient(#777, #777) center / 8px 1.6px no-repeat, linear-gradient(#777, #777) center / 1.6px 8px no-repeat;
}

.workspace {
  flex: 1;
  display: flex;
  min-height: 0;
}

/* left list */
.sidebar {
  width: 274px;
  display: flex;
  flex-direction: column;
  background-color: #f9f9f9;
  border-right: 1px solid #bcbcbc;
}
.sidebar_head {
  height: 27px;
  flex: none;
  display: flex;
  align-items: center;
  padding: 0 5px 0 9px;
  font-size: 12px;
  color: #222;
  border-bottom: 1px solid #cfcfcf;
  background-color: #fbfbfb;
}
.head_tri {
  margin-left: 5px;
  color: #555;
}
.head_toggle {
  margin-left: auto;
  margin-right: 2px;
}
.sidebar_body {
  flex: 1;
  display: flex;
  min-height: 0;
}
.layer_list {
  width: 259px;
  overflow: hidden;
  font-size: 12px;
  color: #1a1a1a;
}
.layer_header, .layer_row {
  height: 27px;
  display: flex;
  align-items: center;
  white-space: nowrap;
}
.layer_header {
  padding-left: 5px;
  background-color: #fafafa;
  border-bottom: 1px solid #cfcfcf;
}
.layer_row {
  padding-left: 8px;
  background-color: #ebebeb;
}
.layer_row:nth-child(even) {
  background-color: #f2f2f2;
}
.layer_row + .layer_header {
  border-top: 1px solid #cfcfcf;
}
.arrow_down {
  width: 0;
  height: 0;
  margin-right: 8px;
  border-left: 5px solid transparent;
  border-right: 5px solid transparent;
  border-top: 7px solid #8f8f8f;
}
.arrow_right {
  width: 0;
  height: 0;
  margin-right: 8px;
  border-top: 5px solid transparent;
  border-bottom: 5px solid transparent;
  border-left: 6px solid #8f8f8f;
}
.folder {
  width: 16px;
  height: 14px;
  margin-right: 7px;
  color: #c9a5de;
}
.folder_blue {
  color: #9fc3dd;
}
.folder_cut {
  margin-left: 14px;
  margin-top: 13px;
}
.page_icon {
  width: 8px;
  height: 13px;
  margin: 0 11px 0 26px;
  border: 1px solid #999;
  background-color: #fbfbfb;
}
.layer_row_page {
  padding-left: 0;
}
.row_flag {
  width: 3px;
  height: 10px;
  margin-left: auto;
  background-color: #aaa;
  clip-path: polygon(100% 0, 100% 100%, 0 100%, 0 40%);
}
.scroll_track {
  width: 14px;
  padding: 3px 3px 0 4px;
  background-color: #fafafa;
  border-left: 1px solid #e3e3e3;
}
.scroll_thumb {
  height: 633px;
  border-radius: 4px;
  background-color: #c3c3c3;
}
.sidebar_foot {
  height: 32px;
  flex: none;
  display: flex;
  align-items: center;
  padding: 0 4px;
  background-color: #f3f3f3;
  border-top: 1px solid #d5d5d5;
}
.filter_box {
  width: 210px;
  height: 19px;
  display: flex;
  align-items: center;
  justify-content: center;
  gap: 5px;
  font-size: 12px;
  color: #bbb;
  background-color: #fff;
  border: 1px solid #c9c9c9;
  border-radius: 4px;
}
.filter_icon {
  color: #777;
}
.foot_icon {
  margin-left: 10px;
}
.foot_pen {
  margin-left: 9px;
}
.foot_count {
  margin-left: 5px;
  font-size: 10px;
  font-weight: bold;
  color: #6ea9e4;
}

/* canvas */
.canvas {
  flex: 1;
  display: flex;
  align-items: flex-start;
  padding: 160px 0 0 48px;
  background-color: #f2f2f2;
  overflow: hidden;
}
.artboard {
  width: 298px;
  flex: none;
}
.artboard_icons { margin-left: 46px; }
.artboard_nav { margin-left: 64px; width: 299px; }
.artboard_keys { margin-left: 46px; }
.artboard_label {
  height: 18px;
  padding-left: 2px;
  font-size: 12px;
  line-height: 14px;
  color: #b5b5b5;
}
.board {
  height: 530px;
  background-color: #fff;
  box-shadow: 0 1px 3px rgba(0, 0, 0, 0.22);
}

.board_text {
  padding: 16px 13px 0 13px;
  text-align: center;
}
.ts {
  line-height: 20px;
  font-size: 16px;
  color: #007aff;
}
.ts_title {
  font-weight: bold;
  color: #000;
}
.ts_big {
  margin-top: 8px;
  font-size: 20px;
  line-height: 24px;
}
.ts_center { margin-top: 8px; }
.ts_bold {
  margin-top: 5px;
  font-weight: bold;
  font-size: 15.5px;
}
.ts_row {
  display: flex;
  justify-content: space-between;
  line-height: 20px;
  font-size: 16px;
}
.ts_buttons {
  margin-top: 3px;
  color: #007aff;
}
.ts_labels {
  display: grid;
  grid-template-columns: 1fr auto 1fr;
  margin-top: 41px;
  line-height: 20px;
  font-size: 16px;
  color: #000;
}
.ts_left {
  text-align: left;
}
.ts_muted {
  text-align: right;
  color: #8e8e93;
}
.ts_tab {
  margin-top: 21px;
  font-size: 10px;
  line-height: 14px;
  color: #929292;
}
.ts_tab_on {
  margin-top: 0;
  color: #007aff;
}

.board_icons {
  display: flex;
  align-items: flex-start;
  gap: 14px;
  padding: 18px 19px;
}
.icon_tile {
  width: 56px;
  height: 57px;
  border-radius: 14px;
  background-color: #929292;
}
.icon_tile_blue {
  background-color: #007aff;
}

.board_nav {
  display: flex;
  flex-direction: column;
  background: linear-gradient(162deg, #0470aa 0%, #279283 22%, #46ab65 44%, #6ccb4e 72%, #90e62b 100%);
}
.nav_bar {
  height: 59px;
  flex: none;
  display: flex;
  flex-direction: column;
  margin-bottom: 22px;
  background-color: rgba(248, 248, 248, 0.7);
  border-bottom: 1px solid rgba(0, 0, 0, 0.28);
}
.nav_bar_tall {
  height: 60px;
}
.nav_bar:nth-child(4) {
  margin-bottom: 0;
}
.status {
  height: 20px;
  flex: none;
  display: grid;
  grid-template-columns: 1fr auto 1fr;
  align-items: center;
  padding: 0 6px;
  font-size: 11px;
  color: #000;
}
.status_left, .status_right {
  display: flex;
  align-items: center;
  gap: 3px;
}
.status_right {
  justify-content: flex-end;
  gap: 4px;
}
.status_right svg:first-child {
  margin-right: 4px;
}
.status_time {
  font-size: 12.5px;
}
.nav_row {
  flex: 1;
  display: grid;
  grid-template-columns: 1fr auto 1fr;
  align-items: center;
  padding: 1px 7px 0 8px;
}
.nav_title {
  font-size: 16px;
  font-weight: bold;
  color: #000;
}
.nav_btn {
  font-size: 16px;
  color: #007aff;
}
.nav_btn_right {
  text-align: right;
}
.nav_back {
  display: flex;
  align-items: center;
  gap: 6px;
}
.nav_plus svg {
  display: block;
  margin: 0 8px 0 auto;
}
.search_bar {
  height: 41px;
  flex: none;
  display: flex;
  align-items: center;
  padding: 0 7px 0 7px;
  background-color: #c9c9ce;
}
.search_field {
  width: 100%;
  height: 26px;
  display: flex;
  align-items: center;
  justify-content: center;
  gap: 6px;
  font-size: 13px;
  color: #8e8e93;
  background-color: #fff;
  border-radius: 4px;
}
.home_area {
  flex: 1;
  display: flex;
  flex-direction: column;
  justify-content: flex-end;
  gap: 9px;
  padding-bottom: 18px;
}
.page_dots {
  display: flex;
  justify-content: center;
  gap: 8.5px;
  padding-left: 1px;
}
.page_dots i {
  width: 6.5px;
  height: 6.5px;
  border-radius: 50%;
  background-color: rgba(255, 255, 255, 0.5);
}
.page_dots i.on {
  background-color: #fff;
}
.page_dots_dark i {
  background-color: rgba(0, 0, 0, 0.45);
}
.page_dots_dark i.on {
  background-color: #000;
}
.tab_bar {
  height: 46px;
  flex: none;
  display: flex;
  background-color: rgba(248, 248, 248, 0.7);
  border-top: 1px solid rgba(0, 0, 0, 0.15);
}
.tab {
  flex: 1;
  position: relative;
  display: flex;
  flex-direction: column;
  align-items: center;
  padding-top: 4px;
  font-size: 10px;
  line-height: 12px;
  color: #929292;
}
.tab svg {
  display: block;
  margin-bottom: 3px;
}
.tab_on {
  color: #007aff;
}
.tab_badge {
  position: absolute;
  top: 2px;
  left: 37px;
  width: 16px;
  height: 16px;
  font-size: 11px;
  font-weight: bold;
  line-height: 16px;
  text-align: center;
  color: #fff;
  background-color: #ff3b30;
  border-radius: 50%;
}

/* keyboards */
.board_keys {
  display: flex;
  flex-direction: column;
  gap: 10px;
  background-color: #fff;
  box-shadow: 0 1px 3px rgba(0, 0, 0, 0.22);
}
.keyboard {
  height: 201px;
  flex: none;
  display: flex;
  flex-direction: column;
  gap: 14.5px;
  padding: 11.5px 3px 0 3px;
  background-color: #d1d5db;
}
.key_row {
  height: 36px;
  flex: none;
  display: flex;
  gap: 6px;
}
.key_row_mid {
  justify-content: center;
}
.key_row_mid .key {
  flex: none;
  width: 23.8px;
}
.key_row_split {
  justify-content: space-between;
}
.key_set {
  display: flex;
  gap: 6px;
}
.key_set .key {
  flex: none;
  width: 23.8px;
}
.key_set .key_wide {
  width: 36px;
}
.key {
  flex: 1;
  display: flex;
  align-items: center;
  justify-content: center;
  font-size: 21px;
  color: #222;
  background-color: #fff;
  border-radius: 4px;
  box-shadow: 0 1px 0 #8f9196;
  min-width: 0;
}
.key_at {
  font-size: 17px;
}
.key_fn {
  background-color: #b3bac6;
}
.key_side {
  flex: none;
  width: 33px;
}
.key_white {
  color: #fff;
}
.key_black {
  color: #000;
  background-color: #fff;
}
.key_mode {
  flex: none;
  width: 31.5px;
}
.key_small {
  padding-bottom: 2px;
  font-size: 14px;
}
.key_tiny {
  font-size: 12px;
}
.key_abc {
  padding-bottom: 2px;
  font-size: 13px;
}
.key_space {
  flex: none;
  width: 113.5px;
  padding-bottom: 3px;
  font-size: 15px;
}
.key_return {
  flex: none;
  width: 69px;
  padding-bottom: 3px;
  font-size: 15px;
}

/* right panel */
.inspector {
  width: 213px;
  flex: none;
  background-color: #e8e8e8;
  border-left: 1px solid #b5b5b5;
  font-size: 12px;
  color: #222;
}
.align_bar {
  height: 27px;
  display: flex;
  align-items: center;
  gap: 11px;
  padding-left: 6px;
  background-color: #f6f6f6;
  border-bottom: 1px solid #cfcfcf;
}
.align_sep {
  width: 1px;
  height: 26px;
  margin: 0 -2px 0 -1px;
  background-color: #e2e2e2;
}
.geometry {
  display: grid;
  grid-template-columns: 63px 59px 16px 59px;
  grid-auto-rows: 35px;
  padding: 8px 0 0 6px;
  height: 114px;
  background-color: #efefef;
  border-bottom: 1px solid #d5d5d5;
}
.field_label {
  padding-top: 1px;
  line-height: 19px;
}
.field {
  display: flex;
  flex-direction: column;
  align-items: center;
}
.input_box {
  display: block;
  width: 100%;
  height: 19px;
  flex: none;
  background-color: #fff;
  border: 1px solid #c6c6c6;
}
.field_caption {
  font-size: 10px;
  line-height: 13px;
}
.field_caption_flip {
  margin-top: 2px;
}
.lock_icon {
  margin: 6px 0 0 5px;
}
.flip_box {
  width: 100%;
  height: 19px;
  display: flex;
  align-items: center;
  justify-content: space-around;
  border: 1px solid #c6c6c6;
  border-radius: 4px;
  background-color: #ececec;
}
.style_box {
  height: 65px;
  display: flex;
  flex-direction: column;
  gap: 9px;
  padding: 9px 9px 0 6px;
  background-color: #efefef;
  border-bottom: 1px solid #d5d5d5;
}
.style_row {
  height: 19px;
  display: flex;
  align-items: center;
}
.style_row .field_label {
  width: 63px;
  flex: none;
}
.slider {
  position: relative;
  width: 80px;
  height: 3px;
  margin-right: 11px;
  border-radius: 2px;
  background-color: #d2d2d2;
}
.slider_knob {
  position: absolute;
  top: -4.500px;
  left: 0;
  width: 12px;
  height: 12px;
  border-radius: 50%;
  background-color: #fff;
  border: 1px solid #d8d8d8;
}
.input_short {
  width: 42px;
}
.select_box {
  flex: 1;
  height: 20px;
  display: flex;
  align-items: center;
  justify-content: space-between;
  padding: 0 4px 0 8px;
  color: #8a8a8a;
  background-color: #e9e9e9;
  border: 1px solid #dcdcdc;
  border-radius: 4px;
}
.section_row {
  height: 26px;
  display: flex;
  align-items: center;
  padding: 2px 9px 0 6px;
  font-weight: bold;
  color: #5b5b5b;
  border-bottom: 1px solid #d5d5d5;
}
.blur_chevron {
  margin-left: 6px;
}
.check_box {
  width: 12px;
  height: 12px;
  margin-left: auto;
  border-radius: 3px;
  background-color: #f2f2f2;
  border: 1px solid #c6c6c6;
}
```
